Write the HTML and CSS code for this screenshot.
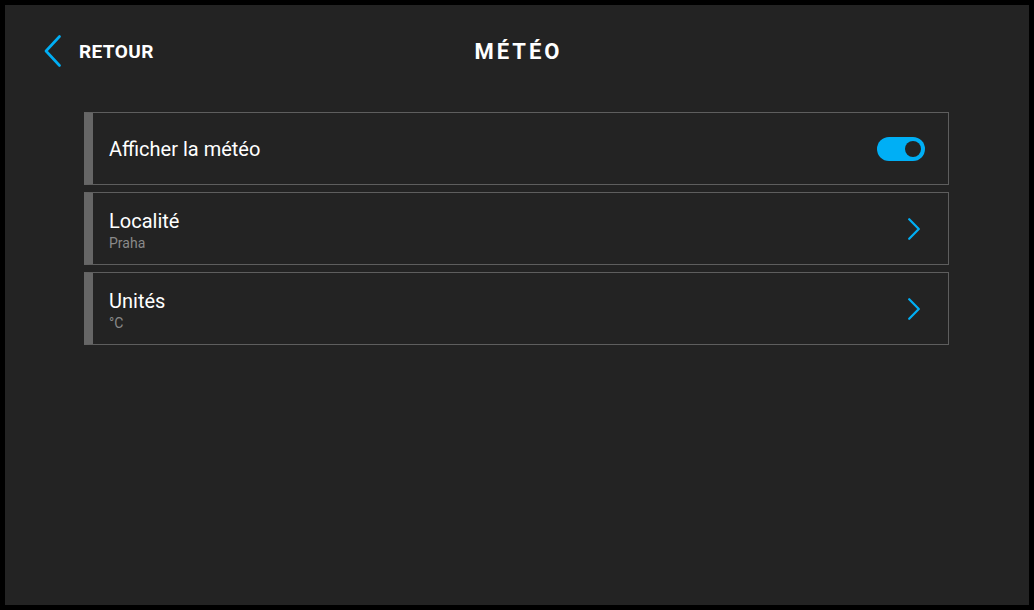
FILE: index.html
```html
<!DOCTYPE html>
<html lang="fr">
<head>
<meta charset="utf-8">
<title>Météo</title>
<link rel="stylesheet" href="styles.css">
</head>
<body>
<div class="frame">
  <header class="header">
    <div class="back">
      <svg class="back-icon" width="17" height="32" viewBox="0 0 17 32"><path d="M15.5 1.5 L2 16 L15.5 30.5" fill="none" stroke="#00aff5" stroke-width="2.6" stroke-linecap="round" stroke-linejoin="round"/></svg>
      <span class="back-label">RETOUR</span>
    </div>
    <h1 class="title">MÉTÉO</h1>
    <div class="spacer"></div>
  </header>
  <main class="list">
    <div class="row">
      <div class="texts single"><div class="row-title">Afficher la météo</div></div>
      <div class="toggle"><span class="knob"></span></div>
    </div>
    <div class="row">
      <div class="texts"><div class="row-title">Localité</div><div class="row-sub">Praha</div></div>
      <svg class="chev" width="12" height="22" viewBox="0 0 12 22"><path d="M1.2 1.2 L10.8 11 L1.2 20.8" fill="none" stroke="#00aff5" stroke-width="2.2" stroke-linecap="round" stroke-linejoin="round"/></svg>
    </div>
    <div class="row">
      <div class="texts"><div class="row-title">Unités</div><div class="row-sub">°C</div></div>
      <svg class="chev" width="12" height="22" viewBox="0 0 12 22"><path d="M1.2 1.2 L10.8 11 L1.2 20.8" fill="none" stroke="#00aff5" stroke-width="2.2" stroke-linecap="round" stroke-linejoin="round"/></svg>
    </div>
  </main>
</div>
</body>
</html>
```
FILE: styles.css
```css
* { box-sizing: border-box; }
html, body { margin: 0; padding: 0; background: #000; }
body { font-family: Roboto, "Liberation Sans", sans-serif; color: #fff; }
.frame {
  width: 1034px;
  height: 610px;
  border: 5px solid #000;
  background: #232323;
}
.header {
  height: 92px;
  display: grid;
  grid-template-columns: 1fr auto 1fr;
  align-items: center;
}
.back {
  display: flex;
  align-items: center;
  gap: 18px;
  padding-left: 39px;
}
.back-icon { display: block; }
.back-label {
  font-size: 19px;
  font-weight: 700;
  line-height: 24px;
  letter-spacing: 0.4px;
  margin-top: 2px;
}
.title {
  margin: 2px -3px 0 0;
  font-size: 22px;
  font-weight: 700;
  letter-spacing: 3px;
  line-height: 26px;
}
.list {
  width: 865px;
  margin: 15px 0 0 79px;
  display: flex;
  flex-direction: column;
  gap: 7px;
}
.row {
  height: 73px;
  border: 1px solid #5e5e5e;
  border-left: 9px solid #666;
  display: flex;
  align-items: center;
  justify-content: space-between;
  padding: 0 23px 0 16px;
}
.texts { display: flex; flex-direction: column; padding-top: 3px; }
.texts.single { padding-top: 0; }
.row-title { font-size: 20px; line-height: 24px; }
.row-sub { font-size: 14px; line-height: 16px; color: #8a8a8a; margin-top: 2px; }
.toggle {
  width: 48px;
  height: 24px;
  border-radius: 12px;
  background: #00aff5;
  display: flex;
  align-items: center;
  justify-content: flex-end;
  padding-right: 4px;
}
.knob { width: 16px; height: 16px; border-radius: 50%; background: #232323; }
.chev { display: block; margin-right: 5px; }
```
